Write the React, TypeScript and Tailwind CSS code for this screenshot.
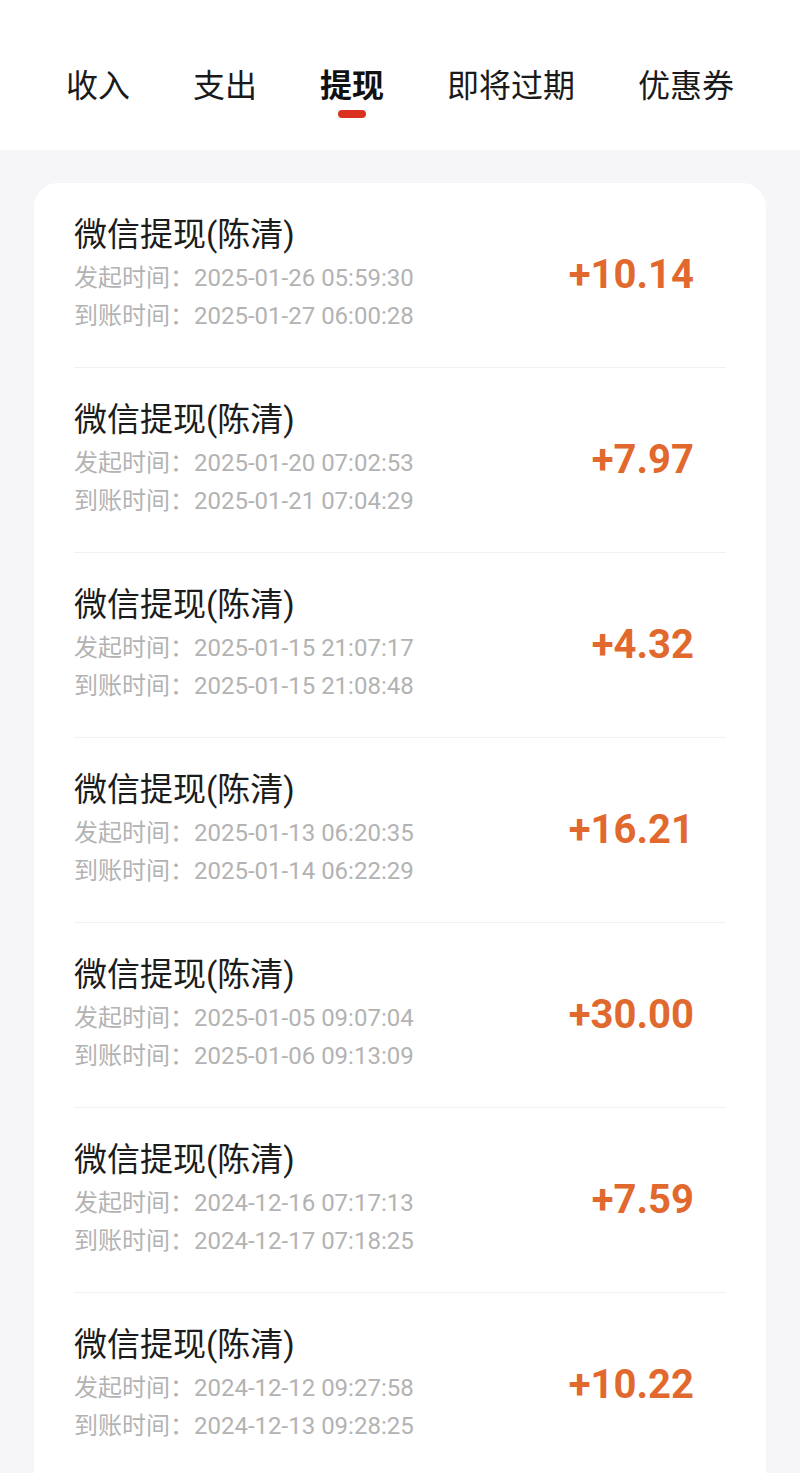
const tabs = ["收入", "支出", "提现", "即将过期", "优惠券"];

const records = [
  { start: "2025-01-26 05:59:30", end: "2025-01-27 06:00:28", amount: "+10.14" },
  { start: "2025-01-20 07:02:53", end: "2025-01-21 07:04:29", amount: "+7.97" },
  { start: "2025-01-15 21:07:17", end: "2025-01-15 21:08:48", amount: "+4.32" },
  { start: "2025-01-13 06:20:35", end: "2025-01-14 06:22:29", amount: "+16.21" },
  { start: "2025-01-05 09:07:04", end: "2025-01-06 09:13:09", amount: "+30.00" },
  { start: "2024-12-16 07:17:13", end: "2024-12-17 07:18:25", amount: "+7.59" },
  { start: "2024-12-12 09:27:58", end: "2024-12-13 09:28:25", amount: "+10.22" },
];

export default function App() {
  return (
    <div
      className="h-screen bg-[#f6f6f8] overflow-hidden"
      style={{ fontFamily: '"Roboto", "Noto Sans CJK SC", sans-serif' }}
    >
      <div className="bg-white pt-[66px] pb-[32px]">
        <div className="flex justify-center gap-[63px]">
          {tabs.map((t) => {
            const active = t === "提现";
            return (
              <div key={t} className="flex flex-col items-center">
                <span
                  className={
                    active
                      ? "text-[32px] leading-[40px] font-bold text-[#111]"
                      : "text-[32px] leading-[40px] text-[#1a1a1a]"
                  }
                >
                  {t}
                </span>
                <span
                  className={
                    active
                      ? "mt-1 h-2 w-[28px] rounded-full bg-[#d9321f]"
                      : "mt-1 h-2 w-[28px]"
                  }
                />
              </div>
            );
          })}
        </div>
      </div>

      <div className="mx-[34px] mt-[33px] pb-10 bg-white rounded-[24px]">
        {records.map((r, i) => (
          <div
            key={i}
            className="mx-10 pt-[32px] pb-[32px] flex items-center border-b border-[#f1f1f1]"
          >
            <div className="flex-1">
              <div className="text-[33px] leading-[40px] text-[#1c1c1c]">
                微信提现(陈清)
              </div>
              <div className="mt-1 text-[24px] leading-[38px] text-[#b3b3b3]">
                发起时间：{r.start}
              </div>
              <div className="text-[24px] leading-[38px] text-[#b3b3b3]">
                到账时间：{r.end}
              </div>
            </div>
            <div className="pr-8 text-[40px] font-bold text-[#e1692e] leading-none">
              {r.amount}
            </div>
          </div>
        ))}
      </div>
    </div>
  );
}
